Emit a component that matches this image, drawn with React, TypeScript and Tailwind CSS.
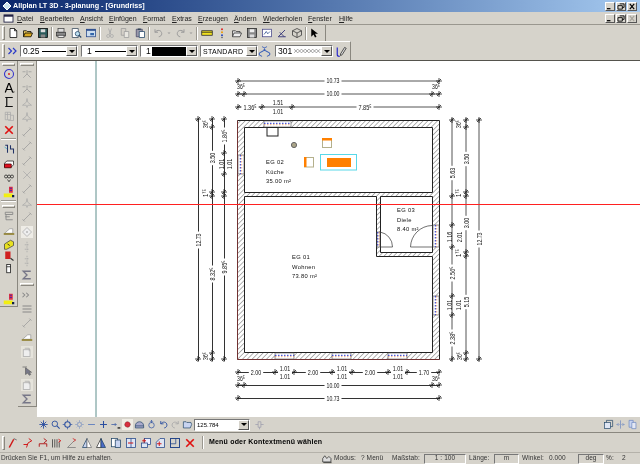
import React from 'react';

const sans = { fontFamily: '"Liberation Sans", Arial, sans-serif' };

// toolbar icons, all on a 16x16 grid
const icons: Record<string, React.ReactNode> = {
    newDoc: <path d="M4 2h6l3 3v9H4z M10 2v3h3" fill="#fff" stroke="#000" />,
    open: <><path d="M2 13V5h4l1 1h5v2" fill="#e8c860" stroke="#000" /><path d="M2 13l2-5h10l-2 5z" fill="#d8a820" stroke="#000" /></>,
    save: <><rect x="2" y="2" width="12" height="12" fill="#2a5a5a" stroke="#000" /><rect x="5" y="3" width="6" height="4" fill="#ddd" /><rect x="5" y="10" width="6" height="4" fill="#888" /></>,
    print: <><rect x="4" y="2" width="8" height="5" fill="#ddd" stroke="#444" /><rect x="2" y="7" width="12" height="5" fill="#888" stroke="#333" /><rect x="4" y="11" width="8" height="3" fill="#eee" stroke="#444" /></>,
    preview: <><path d="M3 2h8v12H3z" fill="#fff" stroke="#345" /><circle cx="10" cy="9" r="3" fill="#bde" stroke="#246" /><path d="M12 11l3 3" stroke="#246" strokeWidth="1.5" /></>,
    win: <><rect x="2" y="3" width="12" height="10" fill="#cde" stroke="#248" /><rect x="2" y="3" width="12" height="2" fill="#248" /><rect x="7" y="8" width="5" height="3" fill="#36a" /></>,
    cut: <><path d="M6 2l3 8M10 2L7 10" fill="none" stroke="#aaa" strokeWidth="1.2" /><circle cx="5.5" cy="12" r="2" fill="none" stroke="#aaa" /><circle cx="10.5" cy="12" r="2" fill="none" stroke="#aaa" /></>,
    copy: <><path d="M3 2h6v9H3z" fill="#d4d0c8" stroke="#999" /><path d="M7 6h6v8H7z" fill="#e8e6e0" stroke="#999" /></>,
    paste: <><path d="M3 3h8v10H3z" fill="#99a" stroke="#446" /><path d="M7 6h7v8H7z" fill="#fff" stroke="#246" /><rect x="5" y="2" width="4" height="2" fill="#345" /></>,
    undo: <path d="M4 7c3-4 9-3 9 2 0 2-2 4-4 4M4 3v4h4" fill="none" stroke="#999" strokeWidth="1.3" />,
    redo: <path d="M12 7C9 3 3 4 3 9c0 2 2 4 4 4M12 3v4H8" fill="none" stroke="#999" strokeWidth="1.3" />,
    caret: <path d="M5 7h6l-3 3z" fill="#999" />,
    ruler: <><rect x="1" y="5" width="14" height="6" fill="#f0e020" stroke="#222" /><path d="M1 7h14" stroke="#222" /></>,
    dots: <><circle cx="8" cy="3" r="1.3" fill="#d22" /><circle cx="8" cy="7" r="1.3" fill="#e90" /><circle cx="8" cy="11" r="1.3" fill="#24b" /><circle cx="8" cy="14" r="1" fill="#555" /></>,
    openOutline: <><path d="M2 13V5h4l1 1h5v2" fill="#ddd" stroke="#333" /><path d="M2 13l2-5h10l-2 5z" fill="#eee" stroke="#333" /></>,
    saveGrey: <><rect x="2" y="2" width="12" height="12" fill="#888" stroke="#222" /><rect x="5" y="3" width="6" height="4" fill="#eee" /><rect x="5" y="10" width="6" height="4" fill="#ddd" /></>,
    picture: <><rect x="2" y="3" width="12" height="10" fill="#fff" stroke="#448" /><path d="M4 10l3-4 2 3 3-3" fill="none" stroke="#248" /></>,
    tool3: <path d="M3 13l9-9M3 13h10M5 7l6 6" fill="none" stroke="#337" strokeWidth="1.2" />,
    cube: <path d="M8 2l6 3v6l-6 3-6-3V5zM2 5l6 3 6-3M8 8v6" fill="none" stroke="#333" />,
    cursor: <path d="M3 2v11l3-3 2 4 2-1-2-4h4z" fill="#000" />,
    grip: <path d="M2 4l4 4-4 4M8 4l4 4-4 4" fill="none" stroke="#2a3ac8" strokeWidth="1.6" />,
    chain: <path d="M5 2c5 2 5 4 0 6s-5 4 0 6M11 2c-5 2-5 4 0 6s5 4 0 6" fill="none" stroke="#3a5fb8" strokeWidth="1.3" />,
    pen: <><path d="M4 3v9q0 2 3 2" fill="none" stroke="#22c" strokeWidth="1.4" /><path d="M8 11l5-8 2 1-5 8-2 1z" fill="#ddd" stroke="#333" /></>,
    target: <><circle cx="8" cy="8" r="6" fill="none" stroke="#33c" strokeWidth="1.4" /><circle cx="8" cy="8" r="1.3" fill="#d22" /></>,
    dimA: <><path d="M3 14L7.5 2h1L13 14M5 10h6" fill="none" stroke="#000" strokeWidth="1.6" /><path d="M13 14h2v-2z" /></>,
    dimI: <path d="M3 2h10M3 14h10M5 2v12" fill="none" stroke="#111" strokeWidth="1.6" />,
    grid: <path d="M3 3h7v10H3zM3 6h7M6 3v10M10 7h4v7h-7" fill="none" stroke="#aaa" />,
    redX: <path d="M3 3l10 10M13 3L3 13" stroke="#e01010" strokeWidth="2.2" />,
    wall: <><path d="M3 3h3v10M10 3v5h4v6" fill="none" stroke="#236" strokeWidth="1.4" /><path d="M2 5l3 3" stroke="#3ac" /></>,
    eraser: <><path d="M2 7l3-3h9v5l-3 3H2z" fill="#fff" stroke="#222" /><path d="M2 8h9v5H2z" fill="#e01020" stroke="#400" /></>,
    plants: <><circle cx="4" cy="6" r="2" fill="none" stroke="#222" /><circle cx="8" cy="6" r="2" fill="none" stroke="#222" /><circle cx="12" cy="6" r="2" fill="none" stroke="#222" /><path d="M6 10l2 3 2-3" fill="none" stroke="#222" /></>,
    layers: <><rect x="1" y="10" width="12" height="5" fill="#f2ee10" /><path d="M8 1h5v8H8z" fill="#e03040" /><path d="M9 3h3M9 6h3" stroke="#22c" /><rect x="12" y="12" width="3" height="3" fill="#124" /></>,
    door: <path d="M3 3h10v3H3zM4 6v7h9M3 9h6" fill="none" stroke="#888" strokeWidth="1.2" />,
    wedge: <><path d="M2 11l7-6h4v6z" fill="#fff" stroke="#999" /><rect x="1" y="11" width="14" height="2" fill="#8a7a20" /></>,
    yellowBox: <><path d="M2 8l8-5 4 2v5l-9 5H2z" fill="#e8e020" stroke="#444" /><path d="M6 8l3 2" stroke="#111" /></>,
    redTool: <><rect x="3" y="2" width="7" height="10" fill="#d02020" /><path d="M10 11l4 3" stroke="#333" strokeWidth="1.5" /></>,
    pillar: <><rect x="5" y="2" width="5" height="11" fill="#fff" stroke="#111" /><path d="M5 5h5" stroke="#111" /></>,
    tri: <path d="M8 2l1 5 5 4H9l-1 3-1-3H2l5-4z" fill="none" stroke="#aaa" />,
    fork: <path d="M8 3v5L3 13M8 8l5 5M2 5h4M10 5h4" fill="none" stroke="#999" />,
    slash: <path d="M3 13L13 3M2 11l3 3M11 2l3 3" fill="none" stroke="#999" />,
    cross: <path d="M3 3l10 10M13 3L3 13" stroke="#aaa" />,
    sigma: <path d="M13 3H3l5 5-5 5h10" fill="none" stroke="#778" strokeWidth="1.8" />,
    lines: <path d="M2 4h12M2 8h12M2 12h12" stroke="#888" strokeWidth="1.5" />,
    diamond: <><rect width="16" height="16" fill="#eeece6" /><path d="M8 2l6 6-6 6-6-6z" fill="#eee" stroke="#aaa" /><circle cx="8" cy="8" r="1" fill="#888" /></>,
    dashed: <path d="M8 1v14M5 5h6M5 11h6" stroke="#aaa" strokeDasharray="2 1" />,
    more: <path d="M2 5l3 3-3 3M7 5l3 3-3 3" fill="none" stroke="#888" strokeWidth="1.4" />,
    pick: <path d="M2 4h6M6 5v9l3-2 2 3 2-1-2-3h3z" fill="#778" stroke="#666" />,
    sheet: <><rect width="16" height="16" fill="#e6e4dc" /><rect x="3" y="5" width="9" height="9" fill="#eee" stroke="#aaa" /><path d="M5 3h6v4" fill="none" stroke="#aaa" /></>,
    star: <path d="M8 2v12M2 8h12M4 4l8 8M12 4l-8 8" stroke="#2a4ea0" strokeWidth="1.3" />,
    zoom: <><circle cx="7" cy="7" r="4" fill="none" stroke="#2a4ea0" strokeWidth="1.3" /><path d="M10 10l4 4" stroke="#2a4ea0" strokeWidth="1.5" /></>,
    move: <><circle cx="8" cy="8" r="4" fill="none" stroke="#2a4ea0" strokeWidth="1.5" /><path d="M8 1v3M8 12v3M1 8h3M12 8h3" stroke="#2a4ea0" /></>,
    sun: <><circle cx="8" cy="8" r="3" fill="none" stroke="#6a86c0" /><path d="M8 2v2M8 12v2M2 8h2M12 8h2M4 4l1 1M11 11l1 1M12 4l-1 1M4 12l1-1" stroke="#6a86c0" /></>,
    minus: <path d="M3 8h10" stroke="#6a86c0" strokeWidth="1.5" />,
    plus: <path d="M3 8h10M8 3v10" stroke="#2a4ea0" strokeWidth="1.5" />,
    pan: <><path d="M2 8h7M7 6l2 2-2 2" fill="none" stroke="#2a4ea0" /><path d="M11 12h4v2h-4z" fill="#222" /></>,
    redDot: <><rect x="0" y="0" width="16" height="16" fill="#efece4" /><circle cx="8" cy="8" r="4" fill="#d83040" stroke="#522" strokeDasharray="1 1" /></>,
    arch: <><path d="M2 10c0-8 12-8 12 0v3H2z" fill="#aac" stroke="#246" /><path d="M2 10h12" stroke="#246" /></>,
    rotate: <><circle cx="8" cy="9" r="4" fill="none" stroke="#2a4ea0" /><path d="M8 2v4M6 4l2-2 2 2" fill="none" stroke="#2a4ea0" /></>,
    back: <path d="M4 7c3-4 9-3 9 2 0 2-2 4-4 4M4 3v4h4" fill="none" stroke="#2a4ea0" strokeWidth="1.3" />,
    forward: <path d="M12 7C9 3 3 4 3 9c0 2 2 4 4 4M12 3v4H8" fill="none" stroke="#aaa" strokeWidth="1.3" />,
    folderBlue: <path d="M2 13V4h4l1 1h6l1 3-2 5z" fill="#c8d4f0" stroke="#246" />,
    pin: <path d="M2 8h4M6 4v8h4V4zM10 8h4M8 12v3" fill="none" stroke="#99a" />,
    winStack: <><rect x="2" y="5" width="9" height="9" fill="#dfe6f4" stroke="#246" /><path d="M5 5V2h9v9h-3" fill="none" stroke="#246" /></>,
    split: <path d="M8 2v12M2 8h3M4 6l2 2-2 2M14 8h-3M12 6l-2 2 2 2" fill="none" stroke="#6a86c0" />,
    copyBlue: <><path d="M3 2h6v10H3z" fill="#c8d4f0" stroke="#6a86c0" /><path d="M7 5h6v9H7z" fill="#e4e8f4" stroke="#6a86c0" /></>,
    slash1: <><path d="M3 14L9 3" stroke="#d01818" strokeWidth="2" /><path d="M9 2l4 2" stroke="#555" /></>,
    slash2: <path d="M2 10h6M6 14l2-6M9 2l4 3-5 3" fill="none" stroke="#d01818" strokeWidth="1.3" />,
    slash3: <path d="M3 13V9h10v4M9 2l4 3-4 3" fill="none" stroke="#b02020" strokeWidth="1.3" />,
    bars: <><path d="M2 3v11M5 3v11M8 3v11" stroke="#333" /><path d="M10 3l3 2-3 2" fill="none" stroke="#d01818" strokeWidth="1.3" /><path d="M11 7v7" stroke="#333" /></>,
    angle: <><path d="M2 14L11 5M2 14h11" fill="none" stroke="#777" /><path d="M9 2l4 2-3 2" fill="none" stroke="#d01818" /></>,
    triL: <><path d="M8 2L2 14h6z" fill="#c8d4f0" stroke="#246" /><path d="M8 2l6 12H8z" fill="#fff" stroke="#777" /></>,
    triR: <><path d="M8 2L2 14h6z" fill="#fff" stroke="#333" /><path d="M8 2l6 12H8z" fill="#4a6ac8" stroke="#246" /></>,
    boxes: <><rect x="2" y="2" width="8" height="11" fill="#fff" stroke="#246" /><rect x="7" y="4" width="7" height="10" fill="#c8d4f0" stroke="#246" /></>,
    boxArrow: <><rect x="2" y="2" width="12" height="12" fill="#dfe6f4" stroke="#248" /><path d="M8 2v12" stroke="#248" /><path d="M4 8h7" stroke="#d01818" strokeWidth="1.4" /></>,
    boxPlus: <><rect x="6" y="2" width="8" height="8" fill="#eef" stroke="#248" /><rect x="2" y="8" width="8" height="6" fill="#dfe6f4" stroke="#248" /><path d="M3 5h5M5.5 2.5v5" stroke="#d01818" strokeWidth="1.3" /></>,
    boxHouse: <><path d="M3 7l5-5h6v12H3z" fill="#dfe6f4" stroke="#248" /><path d="M4 9h6M7 6v6" stroke="#d01818" strokeWidth="1.3" /></>,
    boxSplit: <><rect x="2" y="2" width="12" height="12" fill="none" stroke="#248" strokeWidth="1.3" /><path d="M2 9h7V2" fill="none" stroke="#248" /></>,
    house: <><path d="M1 13V8l3-4 3 4 3-3 3 3v5z" fill="#ddd" stroke="#222" /><path d="M2 14h12" stroke="#222" /></>,
};

function Icon({ name, size = 12 }: { name: string; size?: number }) {
    return (
        <svg viewBox="0 0 16 16" width={size} height={size} className="shrink-0">
            {icons[name]}
        </svg>
    );
}

// one toolbar button, 15px pitch like the original bar
function Cell({ name }: { name: string }) {
    return (
        <div className="flex w-[15px] shrink-0 justify-center">
            <Icon name={name} />
        </div>
    );
}

function Sep({ w }: { w: string }) {
    return (
        <div className={`flex shrink-0 justify-center ${w}`}>
            <div className="h-[13px] w-[2px] border-l border-r border-l-[#9a978f] border-r-white" />
        </div>
    );
}

function Grip() {
    return <div className="h-[14px] w-[3px] shrink-0 border-l border-t border-r border-b border-l-white border-t-white border-r-[#8a877f] border-b-[#8a877f]" />;
}

function Combo({ w, children }: { w: string; children: React.ReactNode }) {
    return (
        <div className={`flex h-[12px] items-center justify-between border border-t-[#777] border-l-[#777] border-r-white border-b-white bg-white text-[8.5px] leading-none text-black ${w}`}>
            <div className="flex min-w-0 flex-1 items-center overflow-hidden pl-[2px]">{children}</div>
            <div className="flex h-[10px] w-[11px] shrink-0 items-center justify-center border border-t-white border-l-white border-r-[#555] border-b-[#555] bg-[#d6d3cb]">
                <div className="h-0 w-0 border-x-[3px] border-t-[3px] border-x-transparent border-t-black" />
            </div>
        </div>
    );
}

function WinBtn({ kind, muted }: { kind: 'min' | 'max' | 'close'; muted?: boolean }) {
    return (
        <div className="flex h-[9px] w-[10px] items-center justify-center border border-t-white border-l-white border-r-[#555] border-b-[#555] bg-[#d6d3cb]">
            <svg viewBox="0 0 9 8" width="8" height="7">
                {kind === 'min' && <path d="M1 6.5h4" stroke="#000" strokeWidth="1.4" />}
                {kind === 'max' && <path d="M3 1h5v4H6M1 3h5v4H1z" fill="none" stroke="#000" />}
                {kind === 'close' && <path d="M2 1l5 6M7 1L2 7" stroke={muted ? '#a5a29a' : '#000'} strokeWidth="1.3" />}
            </svg>
        </div>
    );
}

function VIcon({ name, h = 'h-[15px]' }: { name: string; h?: string }) {
    return (
        <div className={`flex w-full items-center justify-center ${h}`}>
            <Icon name={name} />
        </div>
    );
}

function HGrip() {
    return <div className="mx-[2px] my-[1px] h-[3px] shrink-0 self-stretch border border-t-white border-l-white border-r-[#8a877f] border-b-[#8a877f]" />;
}

function HSep() {
    return <div className="mx-[1px] my-[2px] h-[2px] shrink-0 self-stretch border-t border-b border-t-[#9a978f] border-b-white" />;
}

const menus = [
    ['D', 'atei', 'w-[23px]'],
    ['B', 'earbeiten', 'w-[40px]'],
    ['A', 'nsicht', 'w-[29px]'],
    ['E', 'infügen', 'w-[34px]'],
    ['F', 'ormat', 'w-[29px]'],
    ['E', 'xtras', 'w-[26px]'],
    ['E', 'rzeugen', 'w-[36px]'],
    ['Ä', 'ndern', 'w-[29px]'],
    ['W', 'iederholen', 'w-[45px]'],
    ['F', 'enster', 'w-[31px]'],
    ['H', 'ilfe', 'w-[24px]'],
];

function Tick({ x, y }: { x: number; y: number }) {
    return <path d={`M${x - 3} ${y}h6M${x} ${y - 3}v6M${x - 2} ${y + 2}l4 -4`} stroke="#222" strokeWidth="0.8" fill="none" />;
}

// soft lines sit between two pixels, which gives the wide grey look of the original's upper dimensions
function HDim({ y, from, to, ticks, soft }: { y: number; from: number; to: number; ticks: number[]; soft?: boolean }) {
    const ly = soft ? y : y + 0.5;
    return (
        <g>
            <path d={`M${from} ${ly}H${to}`} stroke={soft ? '#555' : '#333'} strokeWidth="1" />
            {ticks.map((x) => <Tick key={x} x={x} y={y} />)}
        </g>
    );
}

function VDim({ x, from, to, ticks, soft }: { x: number; from: number; to: number; ticks: number[]; soft?: boolean }) {
    const lx = soft ? x : x + 0.5;
    return (
        <g>
            <path d={`M${lx} ${from}V${to}`} stroke={soft ? '#555' : '#333'} strokeWidth="1" />
            {ticks.map((y) => <Tick key={y} x={x} y={y} />)}
        </g>
    );
}

// dimension text is tall and condensed in the original, so squeeze it with textLength
function DimText({ x, y, t }: { x: number; y: number; t: string }) {
    return (
        <text x={x} y={y} textAnchor="middle" fontSize="8" fill="#111" textLength={t.length * 2.6} lengthAdjust="spacingAndGlyphs" style={sans}>
            {t}
        </text>
    );
}

// label on a white knock-out so the dimension line breaks around it
function HLabel({ x, y, t }: { x: number; y: number; t: string }) {
    return (
        <g>
            <rect x={x - t.length * 1.3 - 2} y={y - 5} width={t.length * 2.6 + 4} height={7} fill="#fff" />
            <DimText x={x} y={y} t={t} />
        </g>
    );
}

function VLabel({ x, y, t, bare }: { x: number; y: number; t: string; bare?: boolean }) {
    return (
        <g transform={`translate(${x} ${y}) rotate(-90)`}>
            {!bare && <rect x={-t.length * 1.3 - 2} y={-4} width={t.length * 2.6 + 4} height={7} fill="#fff" />}
            <DimText x={0} y={2.5} t={t} />
        </g>
    );
}

function RoomText({ x, y, lines }: { x: number; y: number; lines: string[] }) {
    return (
        <text fontSize="5.8" letterSpacing="0.3" fill="#111" style={sans}>
            {lines.map((l, i) => <tspan key={l} x={x} y={y + i * 9.5}>{l}</tspan>)}
        </text>
    );
}

function Opening({ x, y, w, h }: { x: number; y: number; w: number; h: number }) {
    const horizontal = w > h;
    return (
        <g>
            <rect x={x} y={y} width={w} height={h} fill="#fff" stroke="#555" strokeWidth="0.6" />
            {horizontal ? (
                <>
                    <path d={`M${x} ${y + h / 2 - 0.7}H${x + w}`} stroke="#2030d0" strokeDasharray="1.5 1.5" />
                    <path d={`M${x} ${y + h / 2 + 0.7}H${x + w}`} stroke="#e07030" strokeWidth="0.6" strokeDasharray="1.5 1.5" />
                </>
            ) : (
                <>
                    <path d={`M${x + w / 2 - 0.7} ${y}V${y + h}`} stroke="#2030d0" strokeDasharray="1.5 1.5" />
                    <path d={`M${x + w / 2 + 0.7} ${y}V${y + h}`} stroke="#e07030" strokeWidth="0.6" strokeDasharray="1.5 1.5" />
                </>
            )}
        </g>
    );
}

function Drawing() {
    return (
        <svg viewBox="37 61 603 356" width="603" height="356" className="block">
            <defs>
                <pattern id="hatch" width="3.4" height="3.4" patternUnits="userSpaceOnUse" patternTransform="rotate(45)">
                    <rect width="3.4" height="3.4" fill="#fff" />
                    <path d="M0 0V3.4" stroke="#555" strokeWidth="0.9" />
                </pattern>
            </defs>

            {/* top dimensions */}
            <HDim soft y={81} from={237} to={440} ticks={[238, 439]} />
            <HLabel x={333} y={83} t="10.73" />
            <HDim soft y={94} from={237} to={440} ticks={[238, 244, 432, 439]} />
            <HLabel x={333} y={96} t="10.00" />
            <DimText x={241} y={89} t="36⁵" />
            <DimText x={436} y={89} t="36⁵" />
            <HDim soft y={107} from={237} to={440} ticks={[238, 262, 292, 439]} />
            <HLabel x={250} y={110} t="1.36⁵" />
            <HLabel x={365} y={110} t="7.85⁵" />
            <DimText x={278} y={105} t="1.51" />
            <DimText x={278} y={114} t="1.01" />

            {/* left dimensions */}
            <VDim x={198} from={118} to={361} ticks={[119, 359]} />
            <VLabel x={198} y={240} t="12.73" />
            <VDim x={212} from={118} to={361} ticks={[119, 127, 192, 196, 353, 359]} />
            <VLabel x={212} y={158} t="3.50" />
            <VLabel x={212} y={274} t="8.32⁵" />
            <VLabel x={205} y={124} t="36⁵" bare />
            <VLabel x={205} y={193} t="1⁷⁵" bare />
            <VLabel x={205} y={356} t="36⁵" bare />
            <VDim x={224} from={118} to={361} ticks={[119, 153, 174, 192, 196, 359]} />
            <VLabel x={224} y={136} t="1.86⁵" />
            <VLabel x={221} y={164} t="1.01" bare />
            <VLabel x={229} y={164} t="1.01" bare />
            <VLabel x={224} y={267} t="9.85⁵" />

            {/* right dimensions */}
            <VDim soft x={452} from={118} to={361} ticks={[120, 196, 225, 247, 296, 315, 359]} />
            <VLabel x={452} y={173} t="5.63" />
            <VLabel x={449} y={237} t="1.16" bare />
            <VLabel x={452} y={273} t="2.56⁵" />
            <VLabel x={449} y={305} t="1.01" bare />
            <VLabel x={452} y={338} t="2.38⁵" />
            <VLabel x={458} y={124} t="36⁵" bare />
            <VLabel x={458} y={193} t="1⁷⁵" bare />
            <VLabel x={458} y={253} t="1⁷⁵" bare />
            <VLabel x={459} y={356} t="36⁵" bare />
            <VDim soft x={466} from={118} to={361} ticks={[120, 127, 192, 196, 252, 256, 353, 359]} />
            <VLabel x={466} y={159} t="3.50" />
            <VLabel x={466} y={223} t="3.00" />
            <VLabel x={459} y={237} t="2.01" bare />
            <VLabel x={466} y={302} t="5.15" />
            <VLabel x={458} y={305} t="1.01" bare />
            <VDim soft x={479} from={118} to={361} ticks={[120, 359]} />
            <VLabel x={479} y={239} t="12.73" />

            {/* bottom dimensions */}
            <HDim y={372} from={237} to={440} ticks={[238, 275, 294, 332, 352, 388, 407, 439]} />
            <HLabel x={256} y={375} t="2.00" />
            <HLabel x={313} y={375} t="2.00" />
            <HLabel x={370} y={375} t="2.00" />
            <HLabel x={424} y={375} t="1.70" />
            {[285, 342, 398].map((x) => (
                <g key={x}>
                    <rect x={x - 7} y={365} width={14} height={14} fill="#fff" />
                    <DimText x={x} y={371} t="1.01" />
                    <DimText x={x} y={379} t="1.01" />
                </g>
            ))}
            <HDim y={385} from={237} to={440} ticks={[238, 244, 432, 439]} />
            <HLabel x={333} y={388} t="10.00" />
            <DimText x={241} y={381} t="36⁵" />
            <DimText x={436} y={381} t="36⁵" />
            <HDim y={398} from={237} to={440} ticks={[238, 439]} />
            <HLabel x={333} y={401} t="10.73" />

            {/* walls */}
            <path
                fillRule="evenodd"
                fill="url(#hatch)"
                stroke="#222"
                strokeWidth="1"
                d="M237.5 120.5H439.5V359.5H237.5Z M244.5 127.5V192.5H432.5V127.5Z M244.5 196.5V352.5H432.5V256.5H376.5V196.5Z M380.5 196.5V252.5H432.5V196.5Z"
            />
            <path d="M237.5 120.5V359.5H439.5" fill="none" stroke="#c04040" strokeWidth="0.5" />

            <Opening x={264} y={121} w={27} h={6} />
            <Opening x={238} y={155} w={6} h={19} />
            <Opening x={275} y={353} w={19} h={6} />
            <Opening x={332} y={353} w={19} h={6} />
            <Opening x={388} y={353} w={19} h={6} />
            <Opening x={433} y={225} w={6} h={22} />
            <Opening x={433} y={296} w={6} h={19} />
            <Opening x={377} y={232} w={3} h={15} />

            {/* doors */}
            <path d="M380 232a15 15 0 0 1 12.5 15H380" fill="none" stroke="#333" strokeWidth="0.7" />
            <path d="M432 225.5a22 22 0 0 0 -21.5 21.5H432" fill="none" stroke="#333" strokeWidth="0.7" />

            {/* furniture */}
            <rect x="267" y="127.5" width="11" height="8.5" fill="#fff" stroke="#222" strokeWidth="1" />
            <circle cx="294" cy="145" r="2.6" fill="#aaa488" stroke="#666" />
            <rect x="322.5" y="138.5" width="9" height="9" fill="#fff" stroke="#b4b08c" />
            <rect x="322" y="138" width="10" height="2.5" fill="#ff8000" />
            <rect x="304.5" y="157.5" width="9" height="9.5" fill="#fff" stroke="#b4b08c" />
            <rect x="304" y="157" width="2.5" height="10" fill="#ff8000" />
            <rect x="320.5" y="154.5" width="36" height="15.5" fill="#fff" stroke="#58d8e8" />
            <rect x="327" y="158" width="24" height="9" fill="#ff8000" />

            <RoomText x={266} y={164} lines={['EG 02', 'Küche', '35.00 m²']} />
            <RoomText x={292} y={259} lines={['EG 01', 'Wohnen', '73.80 m²']} />
            <RoomText x={397} y={212} lines={['EG 03', 'Diele', '8.40 m²']} />

            {/* crosshair */}
            <path d="M96 61V417" stroke="#5f8e8c" strokeWidth="1" />
            <path d="M37 204.5H640" stroke="#ff2020" strokeWidth="1.2" />
        </svg>
    );
}

export default function App() {
    return (
        <div className="flex h-[464px] w-[640px] flex-col overflow-hidden bg-[#d6d3cb] text-black blur-[0.35px]" style={sans}>
            {/* title bar */}
            <div className="flex h-[12px] shrink-0 items-center bg-gradient-to-r from-[#0a246a] to-[#a6caf0] pl-[2px] pr-[3px]">
                <svg viewBox="0 0 10 10" width="10" height="10" className="mr-[1px] shrink-0">
                    <path d="M5 1l4 4-4 4-4-4z" fill="#cfe4f0" stroke="#fff" />
                </svg>
                <span className="text-[7.2px] font-bold leading-none text-white">Allplan LT 3D - 3-planung - [Grundriss]</span>
                <div className="ml-auto flex gap-[1px]">
                    <WinBtn kind="min" />
                    <WinBtn kind="max" />
                    <WinBtn kind="close" />
                </div>
            </div>

            {/* menu */}
            <div className="flex h-[12px] shrink-0 items-center pl-[3px] pr-[3px] text-[7px] leading-none text-[#222]">
                <svg viewBox="0 0 12 10" width="11" height="9" className="mr-[3px] shrink-0">
                    <rect x="1" y="1" width="10" height="8" fill="#fff" stroke="#224" />
                    <rect x="1" y="1" width="10" height="2" fill="#224" />
                </svg>
                {menus.map(([first, rest, w]) => (
                    <span key={first + rest} className={w}>
                        <span className="underline">{first}</span>{rest}
                    </span>
                ))}
                <div className="ml-auto flex gap-[1px]">
                    <WinBtn kind="min" />
                    <WinBtn kind="max" />
                    <WinBtn kind="close" muted />
                </div>
            </div>

            {/* standard toolbar */}
            <div className="flex h-[17px] shrink-0 items-center border-t border-t-[#9a978f]">
                <div className="flex h-full w-[326px] items-center border-r border-r-[#8a877f] pl-[2px]">
                    <Grip />
                    <Cell name="newDoc" />
                    <Cell name="open" />
                    <Cell name="save" />
                    <Sep w="w-[3px]" />
                    <Cell name="print" />
                    <Cell name="preview" />
                    <Cell name="win" />
                    <Sep w="w-[4px]" />
                    <Cell name="cut" />
                    <Cell name="copy" />
                    <Cell name="paste" />
                    <Sep w="w-[3px]" />
                    <Cell name="undo" />
                    <div className="flex w-[8px] shrink-0 justify-center"><Icon name="caret" size={8} /></div>
                    <Cell name="redo" />
                    <div className="flex w-[6px] shrink-0 justify-center"><Icon name="caret" size={8} /></div>
                    <Sep w="w-[5px]" />
                    <Cell name="ruler" />
                    <Cell name="dots" />
                    <Cell name="openOutline" />
                    <Cell name="saveGrey" />
                    <Cell name="picture" />
                    <Cell name="tool3" />
                    <Cell name="cube" />
                    <Sep w="w-[3px]" />
                    <Cell name="cursor" />
                </div>
            </div>

            {/* format toolbar */}
            <div className="flex h-[19px] shrink-0 items-center">
                <div className="flex h-full w-[351px] items-center border-r border-t border-r-[#8a877f] border-t-white pl-[2px]">
                    <Grip />
                    <div className="flex w-[15px] shrink-0 justify-center"><Icon name="grip" /></div>
                    <Combo w="w-[58px]">
                        <span className="mr-[2px]">0.25</span>
                        <div className="h-px flex-1 bg-black" />
                    </Combo>
                    <Combo w="ml-[3px] w-[57px]">
                        <span className="ml-[3px] mr-[3px]">1</span>
                        <div className="h-px flex-1 bg-black" />
                    </Combo>
                    <Combo w="ml-[2px] w-[58px]">
                        <span className="ml-[3px] mr-[1px]">1</span>
                        <div className="h-[9px] flex-1 bg-black" />
                    </Combo>
                    <Combo w="ml-[2px] w-[58px]">
                        <span className="whitespace-nowrap text-[7px] tracking-[0.3px]">STANDARD</span>
                    </Combo>
                    <Icon name="chain" size={13} />
                    <Combo w="ml-[4px] w-[58px]">
                        <span className="mr-[2px]">301</span>
                        <svg viewBox="0 0 30 8" width="28" height="8" className="shrink-0">
                            <path d="M0 2l4 4 4-4 4 4 4-4 4 4 4-4 4 4M0 6l4-4 4 4 4-4 4 4 4-4 4 4 4-4" fill="none" stroke="#777" strokeWidth="0.7" />
                        </svg>
                    </Combo>
                    <div className="ml-[1px]"><Icon name="pen" size={13} /></div>
                </div>
            </div>

            {/* middle */}
            <div className="flex min-h-0 flex-1 border-t border-t-[#55534d]">
                <div className="flex w-[37px] shrink-0">
                    {/* left toolbar */}
                    <div className="flex h-[246px] w-[18px] shrink-0 flex-col border-b border-r border-b-[#8a877f] border-r-[#8a877f] pt-[1px]">
                        <HGrip />
                        <VIcon name="target" h="h-[15px]" />
                        <VIcon name="dimA" />
                        <VIcon name="dimI" h="h-[14px]" />
                        <VIcon name="grid" />
                        <VIcon name="redX" h="h-[14px]" />
                        <HSep />
                        <VIcon name="wall" h="h-[15px]" />
                        <VIcon name="eraser" />
                        <VIcon name="plants" />
                        <VIcon name="layers" h="h-[14px]" />
                        <HSep />
                        <HGrip />
                        <VIcon name="door" h="h-[15px]" />
                        <VIcon name="wedge" />
                        <VIcon name="yellowBox" h="h-[13px]" />
                        <VIcon name="redTool" h="h-[13px]" />
                        <VIcon name="pillar" h="h-[14px]" />
                        <div className="h-[17px]" />
                        <VIcon name="layers" />
                    </div>
                    {/* second left toolbar */}
                    <div className="flex h-[346px] w-[19px] shrink-0 flex-col border-b border-r border-b-[#8a877f] border-r-[#8a877f] pt-[1px]">
                        <HGrip />
                        <VIcon name="fork" />
                        <VIcon name="fork" />
                        <VIcon name="tri" h="h-[14px]" />
                        <VIcon name="tri" />
                        <VIcon name="slash" />
                        <VIcon name="slash" />
                        <VIcon name="slash" />
                        <VIcon name="cross" h="h-[14px]" />
                        <VIcon name="slash" h="h-[14px]" />
                        <VIcon name="tri" />
                        <VIcon name="slash" />
                        <VIcon name="diamond" />
                        <VIcon name="dashed" />
                        <VIcon name="dashed" h="h-[14px]" />
                        <VIcon name="sigma" />
                        <HGrip />
                        <VIcon name="more" />
                        <VIcon name="lines" />
                        <VIcon name="slash" h="h-[14px]" />
                        <VIcon name="wedge" />
                        <VIcon name="sheet" />
                        <div className="h-[4px]" />
                        <VIcon name="pick" />
                        <VIcon name="sheet" />
                        <VIcon name="sigma" h="h-[14px]" />
                    </div>
                </div>
                <div className="min-w-0 flex-1 bg-white">
                    <Drawing />
                </div>
            </div>

            {/* view toolbar */}
            <div className="flex h-[15px] shrink-0 items-center pl-[37px] pr-[1px]">
                {['star', 'zoom', 'move', 'sun', 'minus', 'plus', 'pan', 'redDot', 'arch', 'rotate', 'back', 'forward', 'folderBlue'].map((n) => (
                    <div key={n} className="flex w-[12px] shrink-0 justify-center"><Icon name={n} size={11} /></div>
                ))}
                <Combo w="ml-[1px] w-[56px]"><span className="text-[6px]">125.784</span></Combo>
                <div className="ml-[4px]"><Icon name="pin" size={11} /></div>
                <div className="ml-auto flex gap-[1px] pr-[1px]">
                    <Icon name="winStack" size={11} />
                    <Icon name="split" size={11} />
                    <Icon name="copyBlue" size={11} />
                </div>
            </div>

            {/* command bar */}
            <div className="flex h-[20px] shrink-0 items-center border-t border-t-[#8a877f] pl-[2px]">
                <Grip />
                <div className="flex items-center pl-[1px]">
                    {['slash1', 'slash2', 'slash3', 'bars', 'angle', 'triL', 'triR', 'boxes', 'boxArrow', 'boxPlus', 'boxHouse', 'boxSplit', 'redX'].map((n) => (
                        <div key={n} className="flex w-[14.7px] shrink-0 justify-center"><Icon name={n} /></div>
                    ))}
                </div>
                <Sep w="w-[6px] ml-[3px]" />
                <span className="ml-[3px] whitespace-nowrap text-[7px] font-bold tracking-[0.2px] text-black">Menü oder Kontextmenü wählen</span>
            </div>

            {/* status bar */}
            <div className="flex h-[12px] shrink-0 items-center border-t border-t-[#b5b2aa] pl-[1px] text-[6.5px] leading-none tracking-[0.1px] text-[#333]">
                <span>Drücken Sie F1, um Hilfe zu erhalten.</span>
                <div className="ml-auto flex items-center">
                    <Icon name="house" size={11} />
                    <span className="ml-[1px] w-[27px]">Modus:</span>
                    <span className="w-[31px]">? Menü</span>
                    <span className="w-[32px]">Maßstab:</span>
                    <div className="flex h-[10px] w-[42px] items-center justify-center border border-t-[#777] border-l-[#777] border-r-white border-b-white">1 : 100</div>
                    <span className="ml-[3px] w-[25px]">Länge:</span>
                    <div className="flex h-[10px] w-[25px] items-center justify-center border border-t-[#777] border-l-[#777] border-r-white border-b-white">m</div>
                    <span className="ml-[3px] w-[27px]">Winkel:</span>
                    <span className="w-[29px]">0.000</span>
                    <div className="flex h-[10px] w-[26px] items-center justify-center border border-t-[#777] border-l-[#777] border-r-white border-b-white">deg</div>
                    <span className="ml-[2px] w-[16px]">%:</span>
                    <span className="w-[18px]">2</span>
                </div>
            </div>
        </div>
    );
}
